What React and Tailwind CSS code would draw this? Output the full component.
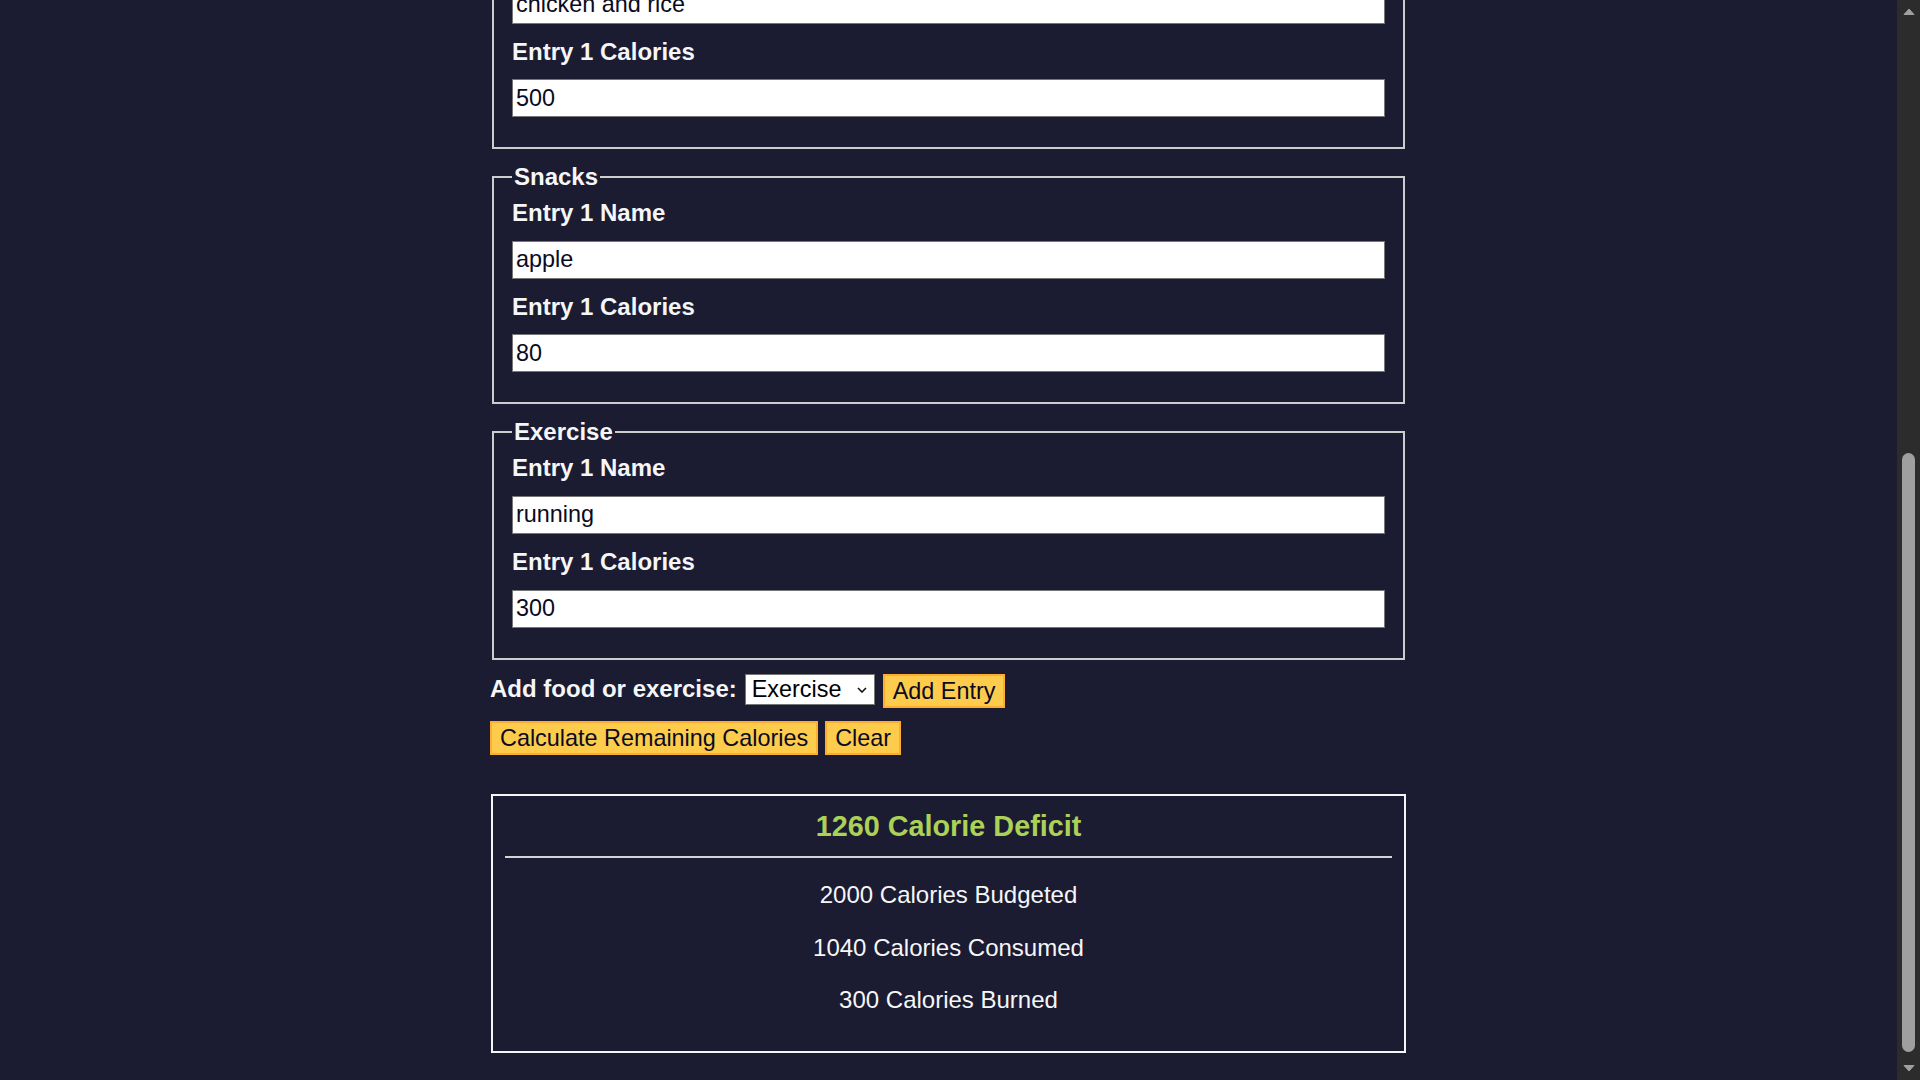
import { useState } from "react";

const meals = [
  { legend: "Dinner", name: "chicken and rice", calories: "500" },
  { legend: "Snacks", name: "apple", calories: "80" },
  { legend: "Exercise", name: "running", calories: "300" },
];

function EntryFieldset({ legend, name, calories }) {
  return (
    <fieldset className="mx-[2px] mb-[14px] border-2 border-[#cdcdcd] px-[18px] pt-[8.4px] pb-[16px]">
      <legend className="px-[2px] text-[24px] font-bold leading-[27.6px]">{legend}</legend>
      <label className="mb-[14px] block text-[24px] font-bold leading-[27.6px]">Entry 1 Name</label>
      <input
        type="text"
        defaultValue={name}
        className="mb-[14px] block h-[38px] w-full border border-[#767676] bg-white px-[3px] text-[23.4px] text-[#0a0a23] outline-none"
      />
      <label className="mb-[14px] block text-[24px] font-bold leading-[27.6px]">Entry 1 Calories</label>
      <input
        type="number"
        defaultValue={calories}
        className="mb-[14px] block h-[38px] w-full border border-[#767676] bg-white px-[3px] text-[23.4px] text-[#0a0a23] outline-none [appearance:textfield] [&::-webkit-inner-spin-button]:appearance-none"
      />
    </fieldset>
  );
}

function YellowButton({ children, className = "" }) {
  return (
    <button
      type="button"
      className={`h-[34px] border-2 border-[#ffac33] bg-[#fecc4c] px-[8px] text-[23.4px] leading-[26px] text-[#0a0a23] ${className}`}
    >
      {children}
    </button>
  );
}

function Scrollbar() {
  return (
    <div className="flex w-[23px] shrink-0 flex-col bg-[#2c2c2c]">
      <div className="flex h-[23px] items-center justify-center">
        <svg width="12" height="7" viewBox="0 0 12 7">
          <path d="M1 6.5 L6 1 L11 6.5 Z" fill="#9f9f9f" stroke="#9f9f9f" strokeLinejoin="round" />
        </svg>
      </div>
      <div className="flex flex-1 flex-col justify-end pb-[5px]">
        <div className="mx-auto h-[599px] w-[13px] rounded-full bg-[#9f9f9f]" />
      </div>
      <div className="flex h-[23px] items-center justify-center">
        <svg width="12" height="7" viewBox="0 0 12 7">
          <path d="M1 0.5 L6 6 L11 0.5 Z" fill="#9f9f9f" stroke="#9f9f9f" strokeLinejoin="round" />
        </svg>
      </div>
    </div>
  );
}

export default function App() {
  const [entryType, setEntryType] = useState("exercise");

  return (
    <div className="flex h-screen overflow-hidden bg-[#1b1b32] font-['Liberation_Sans',Arial,sans-serif] text-[#f5f6f7]">
      <main className="min-w-0 flex-1">
        <div className="mx-auto -mt-[92px] w-[917px]">
          {meals.map((m) => (
            <EntryFieldset key={m.legend} {...m} />
          ))}

          {/* add entry controls */}
          <div className="flex items-start">
            <label className="mt-[1px] text-[24px] font-bold leading-[27.6px]">Add food or exercise:</label>
            <div className="relative ml-[8px]">
              <select
                value={entryType}
                onChange={(e) => setEntryType(e.target.value)}
                className="block h-[31px] w-[130px] appearance-none border border-[#767676] bg-white pl-[6px] text-[23.4px] leading-[27px] text-black outline-none"
              >
                <option value="breakfast">Breakfast</option>
                <option value="lunch">Lunch</option>
                <option value="dinner">Dinner</option>
                <option value="snacks">Snacks</option>
                <option value="exercise">Exercise</option>
              </select>
              <svg
                className="pointer-events-none absolute right-[8px] top-[13px]"
                width="10"
                height="6"
                viewBox="0 0 10 6"
              >
                <path d="M1 1 L5 5 L9 1" fill="none" stroke="#111" strokeWidth="1.6" />
              </svg>
            </div>
            <YellowButton className="ml-[8px]">Add Entry</YellowButton>
          </div>

          <div className="mt-[13px] flex gap-[7px]">
            <YellowButton>Calculate Remaining Calories</YellowButton>
            <YellowButton>Clear</YellowButton>
          </div>

          {/* result */}
          <div className="mx-px mt-[39px] border-2 border-[#f5f6f7] px-[12px] pt-[14px] pb-[37px] text-center">
            <span className="block text-[28.8px] font-bold leading-[33px] text-[#acd157]">1260 Calorie Deficit</span>
            <hr className="mt-[13px] border-t-2 border-[#d4d4d4]" />
            <div className="mt-[23.4px] flex flex-col gap-[25px] text-[24px] leading-[27.6px]">
              <p>2000 Calories Budgeted</p>
              <p>1040 Calories Consumed</p>
              <p>300 Calories Burned</p>
            </div>
          </div>
        </div>
      </main>
      <Scrollbar />
    </div>
  );
}
